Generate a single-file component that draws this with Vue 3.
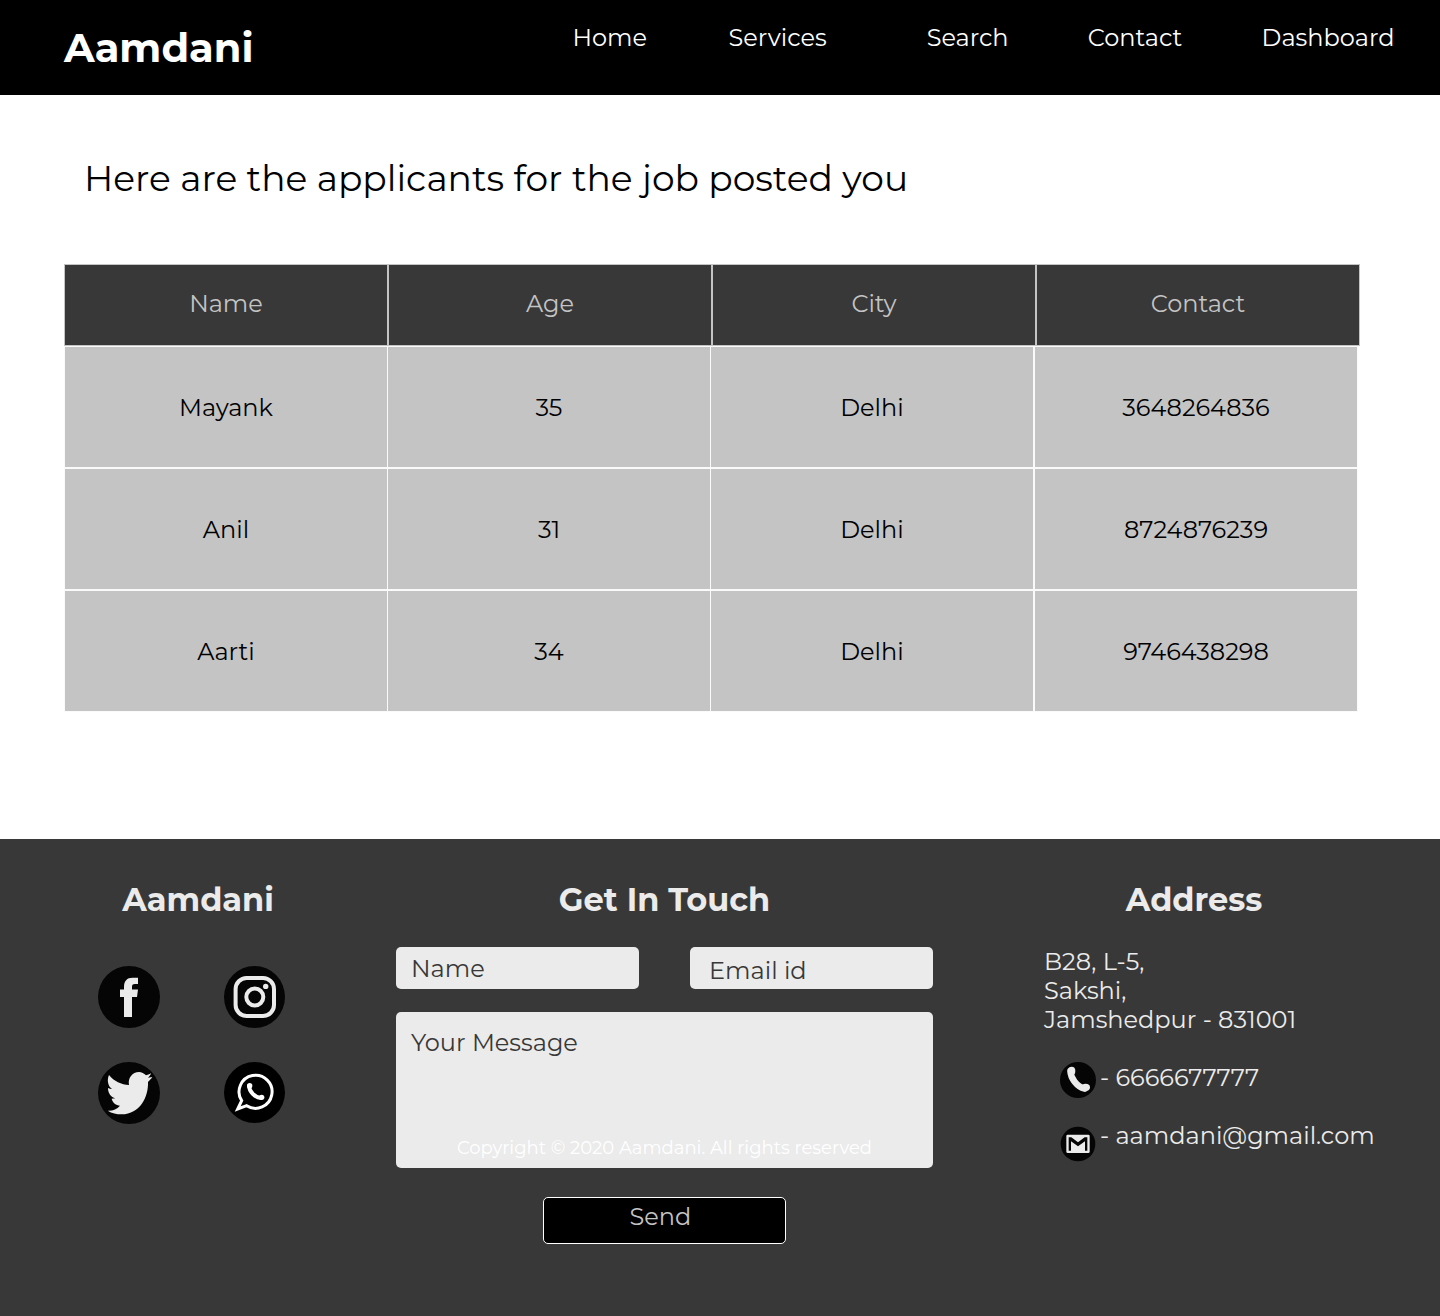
<script setup>
const links = ['Home', 'Services', 'Search', 'Contact', 'Dashboard']
const columns = ['Name', 'Age', 'City', 'Contact']
const applicants = [
  { name: 'Mayank', age: 35, city: 'Delhi', contact: '3648264836' },
  { name: 'Anil', age: 31, city: 'Delhi', contact: '8724876239' },
  { name: 'Aarti', age: 34, city: 'Delhi', contact: '9746438298' },
]
</script>

<template>
  <div class="page">
    <header class="topbar">
      <a class="logo" href="#">Aamdani</a>
      <nav class="nav">
        <a v-for="link in links" :key="link" href="#">{{ link }}</a>
      </nav>
    </header>

    <main class="main">
      <h1>Here are the applicants for the job posted you</h1>
      <table class="applicants">
        <thead>
          <tr>
            <th v-for="column in columns" :key="column" scope="col">{{ column }}</th>
          </tr>
        </thead>
        <tbody>
          <tr v-for="person in applicants" :key="person.name">
            <td>{{ person.name }}</td>
            <td>{{ person.age }}</td>
            <td>{{ person.city }}</td>
            <td>{{ person.contact }}</td>
          </tr>
        </tbody>
      </table>
    </main>

    <footer class="footer">
      <section class="brand">
        <h2>Aamdani</h2>
        <div class="social">
          <a href="#" aria-label="Facebook">
            <svg viewBox="0 0 62 62">
              <circle cx="31" cy="31" r="31" fill="#050505" />
              <path fill="#ebebeb" d="M26 51V31H22V23.5H26V21C26 15 29 11.7 34.5 11.7H40V18H37C34.5 18 34 19 34 21V23.5H40L39 31H34V51Z" />
            </svg>
          </a>
          <a href="#" aria-label="Instagram">
            <svg viewBox="0 0 62 62">
              <ellipse cx="30.5" cy="31" rx="30.5" ry="31" fill="#050505" />
              <g fill="none" stroke="#ebebeb" stroke-width="4">
                <rect x="11.6" y="12" width="38.4" height="38" rx="11" />
                <circle cx="30.8" cy="31" r="8.5" />
              </g>
              <circle cx="41.7" cy="20.4" r="2.7" fill="#ebebeb" />
            </svg>
          </a>
          <a href="#" aria-label="Twitter">
            <svg viewBox="0 0 186 186">
              <circle cx="93" cy="93" r="93" fill="#050505" />
              <path fill="#ebebeb" d="M33 39C48 58 70 68 93 69C89 48 103 30 123 30C131 30 138 34 144 40C149 39 154 37 159 34C157 40 154 44 150 47L163 45C159 51 155 55 150 60C152 104 126 157 71 157C55 157 42 154 29 146C44 147 56 142 66 131C54 130 44 122 41 110L52 109C39 105 30 94 30 78C34 80 38 81 42 81C30 73 26 54 33 39Z" />
            </svg>
          </a>
          <a href="#" aria-label="WhatsApp">
            <svg viewBox="0 0 186 186">
              <circle cx="91.5" cy="91.5" r="91.5" fill="#000" />
              <g fill="none" stroke="#fff">
                <path stroke-width="9" d="M53 116A49.500 49.500 0 1 1 68 131L41 141Z" />
                <path stroke-width="12" stroke-linecap="round" d="M75 72C76 89 92 106 111 108" />
              </g>
              <circle cx="77" cy="71" r="8" fill="#fff" />
              <circle cx="113" cy="106" r="8" fill="#fff" />
            </svg>
          </a>
        </div>
      </section>

      <section class="touch">
        <h2>Get In Touch</h2>
        <form @submit.prevent>
          <div class="fields">
            <input type="text" placeholder="Name" aria-label="Name" />
            <input class="email" type="email" placeholder="Email id" aria-label="Email id" />
          </div>
          <div class="message">
            <textarea placeholder="Your Message" aria-label="Your Message"></textarea>
            <small>Copyright © 2020 Aamdani. All rights reserved</small>
          </div>
          <button type="submit">Send</button>
        </form>
      </section>

      <section class="address">
        <h2>Address</h2>
        <address>
          <p>B28, L-5,<br />Sakshi,<br />Jamshedpur - 831001</p>
          <div class="line">
            <svg viewBox="0 0 108 108" aria-hidden="true">
              <circle cx="54" cy="54" r="54" fill="#050505" />
              <path fill="none" stroke="#ebebeb" stroke-width="19" stroke-linecap="round" d="M31 27C32 48 50 74 74 80" />
              <ellipse cx="35" cy="27" rx="11" ry="13" fill="#ebebeb" />
              <ellipse cx="77" cy="76" rx="13" ry="11" fill="#ebebeb" />
            </svg>
            <span>- 6666677777</span>
          </div>
          <div class="line mail">
            <svg viewBox="0 0 108 108" aria-hidden="true">
              <circle cx="54" cy="54" r="52" fill="#050505" />
              <rect x="19" y="26" width="70" height="55" rx="4" fill="#ebebeb" />
              <path fill="#050505" d="M26 34H34L54 49L74 34H82V74H75V46L54 61L33 46V74H26Z" />
            </svg>
            <span>- aamdani@gmail.com</span>
          </div>
        </address>
      </section>
    </footer>
  </div>
</template>

<style>
body {
  margin: 0;
}
</style>

<style scoped>
.page {
  background: #fff;
  color: #000;
  font-family: Montserrat, Inter, sans-serif;
  font-size: 24px;
  line-height: 29px;
}

.page * {
  box-sizing: border-box;
}

a {
  color: inherit;
  text-decoration: none;
}

.topbar {
  display: flex;
  justify-content: space-between;
  height: 95px;
  background: #000;
  color: #fff;
}

.logo {
  padding: 23px 0 0 64px;
  font-size: 40px;
  font-weight: 700;
  line-height: 49px;
}

.nav {
  display: grid;
  grid-template-columns: 125fr 211fr 169fr 166fr 220fr;
  width: 62%;
  padding: 23px 2px 0 0;
  text-align: center;
}

.main {
  padding: 61px 80px 127px 64px;
}

h1 {
  margin: 0 0 64px;
  padding-left: 20px;
  font-size: 36px;
  font-weight: 400;
  line-height: 44px;
}

.applicants,
.applicants thead,
.applicants tbody {
  display: block;
}

.applicants tr {
  display: grid;
  grid-template-columns: repeat(4, 1fr);
}

.applicants tbody tr {
  grid-template-columns: 323fr 323fr 323fr 325fr;
  margin-right: 2px;
}

th,
td {
  display: flex;
  align-items: center;
  justify-content: center;
  padding: 0;
}

th {
  height: 82px;
  padding-bottom: 4px;
  border: 1px solid #c4c4c4;
  background: #383838;
  color: #c4c4c4;
  font-weight: 400;
}

td {
  height: 122px;
  border: solid #fafafa;
  border-width: 1px 0 1px 1px;
  background: #c4c4c4;
}

td:last-child {
  border-width: 1px 1px 1px 2px;
}

.footer {
  display: grid;
  grid-template-columns: 396fr 537fr 507fr;
  padding: 41px 0 72px;
  background: #383838;
  color: #ebebeb;
}

h2 {
  margin: 0 0 1px;
  font-size: 32px;
  font-weight: 700;
  line-height: 39px;
  text-align: center;
}

.social {
  display: grid;
  grid-template-columns: 62px 62px;
  gap: 34px 64px;
  padding: 46px 0 0 98px;
}

.social a,
.social svg {
  display: block;
  height: 62px;
}

form {
  display: flex;
  flex-direction: column;
  padding-top: 27px;
}

.fields {
  display: grid;
  grid-template-columns: 1fr 1fr;
  gap: 51px;
}

input,
textarea {
  display: block;
  width: 100%;
  border: 0;
  border-radius: 5px;
  background: #ebebeb;
  color: #383838;
  font: inherit;
}

input {
  height: 42px;
  padding: 0 15px;
}

.email {
  padding: 5px 19px 0;
}

::placeholder {
  color: #383838;
  opacity: 1;
}

.message {
  position: relative;
  margin-top: 23px;
}

textarea {
  height: 156px;
  padding: 16px 15px;
  resize: none;
}

small {
  position: absolute;
  right: 0;
  bottom: 9px;
  left: 0;
  color: #fff;
  font-size: 18px;
  line-height: 22px;
  text-align: center;
  pointer-events: none;
}

button {
  align-self: center;
  width: 243px;
  height: 47px;
  margin-top: 29px;
  padding: 0 8px 8px 0;
  border: 1px solid #fff;
  border-radius: 5px;
  background: #000;
  color: #c4c4c4;
  font: inherit;
}

.address {
  padding-left: 111px;
}

.address h2 {
  width: 300px;
}

address {
  padding-top: 27px;
  font-style: normal;
  white-space: nowrap;
}

address p {
  margin: 0 0 28px;
}

.line {
  display: flex;
  gap: 4px;
  padding-left: 16px;
  line-height: 32px;
}

.line svg {
  width: 36px;
  height: 36px;
}

.mail {
  align-items: flex-start;
  margin-top: 22px;
}

.mail svg {
  margin-top: 6px;
}
</style>
